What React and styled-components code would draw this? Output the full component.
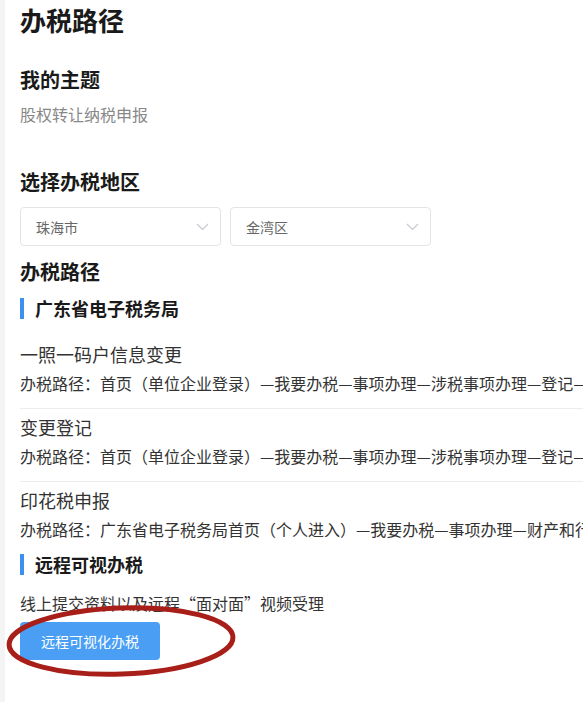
import React from "react";
import styled, { createGlobalStyle } from "styled-components";

const GlobalStyle = createGlobalStyle`
  html, body {
    margin: 0;
    padding: 0;
    background: #fff;
    overflow: hidden;
  }
  body {
    font-family: "Noto Sans CJK SC", "Noto Sans", sans-serif;
    color: #222;
  }
`;

const regions = [
  { label: "珠海市" },
  { label: "金湾区" },
];

const routes = [
  {
    title: "一照一码户信息变更",
    path: "办税路径：首页（单位企业登录）—我要办税—事项办理—涉税事项办理—登记—一照一码户信息变更",
  },
  {
    title: "变更登记",
    path: "办税路径：首页（单位企业登录）—我要办税—事项办理—涉税事项办理—登记—变更登记",
  },
  {
    title: "印花税申报",
    path: "办税路径：广东省电子税务局首页（个人进入）—我要办税—事项办理—财产和行为税—印花税申报",
  },
];

const Chevron = () => (
  <svg width="13" height="8" viewBox="0 0 13 8" fill="none">
    <polyline points="1,1 6.5,6.5 12,1" stroke="#c6c9cf" strokeWidth="1.2" />
  </svg>
);

const App = () => {
  return (
    <>
      <GlobalStyle />
      <Page>
        <Title>办税路径</Title>

        <Heading $top={28}>我的主题</Heading>
        <Topic>股权转让纳税申报</Topic>

        <Heading $top={42}>选择办税地区</Heading>
        <SelectRow>
          {regions.map((r) => (
            <Select key={r.label}>
              <span>{r.label}</span>
              <Chevron />
            </Select>
          ))}
        </SelectRow>

        <Heading $top={12}>办税路径</Heading>
        <SubHeading $top={10}>广东省电子税务局</SubHeading>
        <RouteList>
          {routes.map((r) => (
            <RouteItem key={r.title}>
              <RouteTitle>{r.title}</RouteTitle>
              <RoutePath>{r.path}</RoutePath>
            </RouteItem>
          ))}
        </RouteList>

        <SubHeading $top={1}>远程可视办税</SubHeading>
        <Desc>线上提交资料以及远程“面对面”视频受理</Desc>
        <ButtonWrap>
          <PrimaryButton type="button">远程可视化办税</PrimaryButton>
          <Circle width="236" height="80" viewBox="0 0 236 80">
            <ellipse
              cx="116"
              cy="40"
              rx="112"
              ry="33"
              fill="none"
              stroke="#a81f19"
              strokeWidth="5"
              transform="rotate(-2 116 40)"
            />
          </Circle>
        </ButtonWrap>
      </Page>
    </>
  );
};

export default App;

const Page = styled.div`
  min-height: 702px;
  box-sizing: border-box;
  border-left: 5px solid #f4f4f5;
  padding: 2px 0 0 15px;
  display: flex;
  flex-direction: column;
  align-items: flex-start;
  overflow: hidden;
`;

const Title = styled.h1`
  margin: 0;
  font-size: 26px;
  line-height: 36px;
  font-weight: 700;
  color: #1a1a1a;
`;

const Heading = styled.h2`
  margin: ${(p) => p.$top}px 0 0;
  font-size: 20px;
  line-height: 28px;
  font-weight: 700;
  color: #1a1a1a;
`;

const Topic = styled.p`
  margin: 8px 0 0;
  font-size: 16px;
  line-height: 24px;
  color: #888;
`;

const SelectRow = styled.div`
  margin-top: 11px;
  display: flex;
  gap: 9px;
`;

const Select = styled.div`
  box-sizing: border-box;
  width: 201px;
  height: 39px;
  border: 1px solid #e2e4e8;
  border-radius: 4px;
  padding: 0 11px 0 15px;
  display: flex;
  align-items: center;
  justify-content: space-between;
  font-size: 14px;
  color: #666;
`;

const SubHeading = styled.h3`
  margin: ${(p) => p.$top}px 0 0;
  display: flex;
  align-items: center;
  gap: 11px;
  font-size: 18px;
  line-height: 24px;
  font-weight: 700;
  color: #1a1a1a;
  &::before {
    content: "";
    width: 4px;
    height: 21px;
    background: #3d8ff0;
  }
`;

const RouteList = styled.div`
  margin-top: 16px;
  align-self: stretch;
  display: flex;
  flex-direction: column;
  overflow: hidden;
`;

const RouteItem = styled.div`
  padding: 5px 0 13px;
  border-bottom: 1px solid #ececec;
  &:last-child {
    border-bottom: none;
    padding-bottom: 10px;
  }
`;

const RouteTitle = styled.div`
  font-size: 18px;
  line-height: 26px;
  color: #333;
`;

const RoutePath = styled.div`
  margin-top: 4px;
  font-size: 16px;
  line-height: 24px;
  color: #333;
  white-space: nowrap;
  overflow: hidden;
`;

const Desc = styled.p`
  margin: 15px 0 0;
  font-size: 16px;
  line-height: 24px;
  color: #333;
`;

const ButtonWrap = styled.div`
  position: relative;
  margin-top: 7px;
`;

const PrimaryButton = styled.button`
  width: 140px;
  height: 38px;
  border: none;
  border-radius: 4px;
  background: #4a9ff5;
  color: #fff;
  font-family: inherit;
  font-size: 14px;
  cursor: pointer;
`;

const Circle = styled.svg`
  position: absolute;
  left: -15px;
  top: -21px;
  pointer-events: none;
`;
